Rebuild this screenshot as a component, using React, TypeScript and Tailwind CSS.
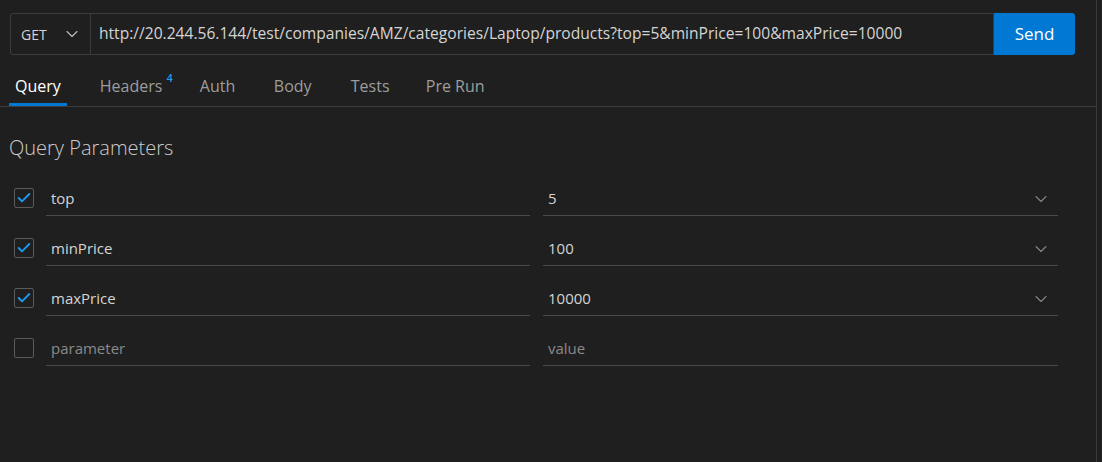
import { Check, ChevronDown } from "lucide-react";

const params = [
  { key: "top", value: "5", checked: true },
  { key: "minPrice", value: "100", checked: true },
  { key: "maxPrice", value: "10000", checked: true },
];

const tabs = [
  { name: "Query", w: "" },
  { name: "Headers", w: "w-[100px]" },
  { name: "Auth", w: "w-[74px]" },
  { name: "Body", w: "w-[77px]" },
  { name: "Tests", w: "w-[75px]" },
  { name: "Pre Run", w: "w-[80px]" },
];

const ParamRow = ({ k, v, checked, placeholder }: { k?: string; v?: string; checked: boolean; placeholder?: boolean }) => (
  <div className="flex items-center h-[50px]">
    <div className="w-[46px] pl-[14px]">
      <div className="w-5 h-5 border border-[#5a5a5a] rounded-[2px] flex items-center justify-center">
        {checked && <Check className="w-4 h-4 text-[#1a9cf0]" strokeWidth={2.75} />}
      </div>
    </div>
    <div className="w-[484px] h-[34px] mt-[2px] border-b border-[#4a4a4a] flex items-center pl-[5px]">
      <span className={placeholder ? "text-[#8a8a8a]" : "text-[#d4d4d4]"}>{placeholder ? "parameter" : k}</span>
    </div>
    <div className="w-[13px]" />
    <div className="w-[515px] h-[34px] mt-[2px] border-b border-[#4a4a4a] flex items-center pl-[5px] pr-[7px]">
      <span className={`flex-1 ${placeholder ? "text-[#8a8a8a]" : "text-[#d4d4d4]"}`}>{placeholder ? "value" : v}</span>
      {!placeholder && <ChevronDown className="w-5 h-5 text-[#858585]" strokeWidth={1.3} />}
    </div>
  </div>
);

export default function App() {
  return (
    <div className="w-[1102px] h-[462px] bg-[#1f1f1f] flex font-['Open_Sans',sans-serif] text-[15px]">
      <div className="w-[1097px] h-full border-r border-[#3a3a3a] flex flex-col">
        <div className="pt-[13px] pl-[10px] pr-[21px]">
          <div className="flex h-[42px]">
            <div className="flex flex-1 border border-[#3c3c3c] rounded-l-[3px]">
              <div className="w-[80px] flex items-center justify-between pl-[10px] pr-[8px] border-r border-[#3c3c3c] text-[#d4d4d4] text-[14px]">
                <span>GET</span>
                <ChevronDown className="w-[20px] h-[20px] text-[#bbb]" strokeWidth={1.3} />
              </div>
              <div className="flex-1 flex items-center pl-[8px] text-[#d4d4d4] text-[15.6px] whitespace-nowrap overflow-hidden">
                http://20.244.56.144/test/companies/AMZ/categories/Laptop/products?top=5&amp;minPrice=100&amp;maxPrice=10000
              </div>
            </div>
            <button className="w-[81px] bg-[#0078d4] text-white text-[17px] rounded-r-[3px]">Send</button>
          </div>
        </div>
        <div className="flex h-[52px] border-b border-[#3c3c3c] pl-[9px] text-[16px]">
          {tabs.map((t, i) => (
            <div
              key={t.name}
              className={`flex items-center ${t.w} ${i === 0 ? "pt-[13px] px-[6px] border-b-[3px] border-[#0078d4] text-white mr-[33px]" : "pt-[10px] text-[#9d9d9d]"}`}
            >
              {t.name}
              {t.name === "Headers" && <span className="text-[#1a9cf0] text-[11px] font-semibold ml-[4px] -mt-[14px]">4</span>}
            </div>
          ))}
        </div>
        <div className="pl-[9px] pt-[26px] text-[20px] font-light text-[#cccccc]">Query Parameters</div>
        <div className="mt-[10px]">
          {params.map((p) => (
            <ParamRow key={p.key} k={p.key} v={p.value} checked={p.checked} />
          ))}
          <ParamRow checked={false} placeholder />
        </div>
      </div>
    </div>
  );
}
